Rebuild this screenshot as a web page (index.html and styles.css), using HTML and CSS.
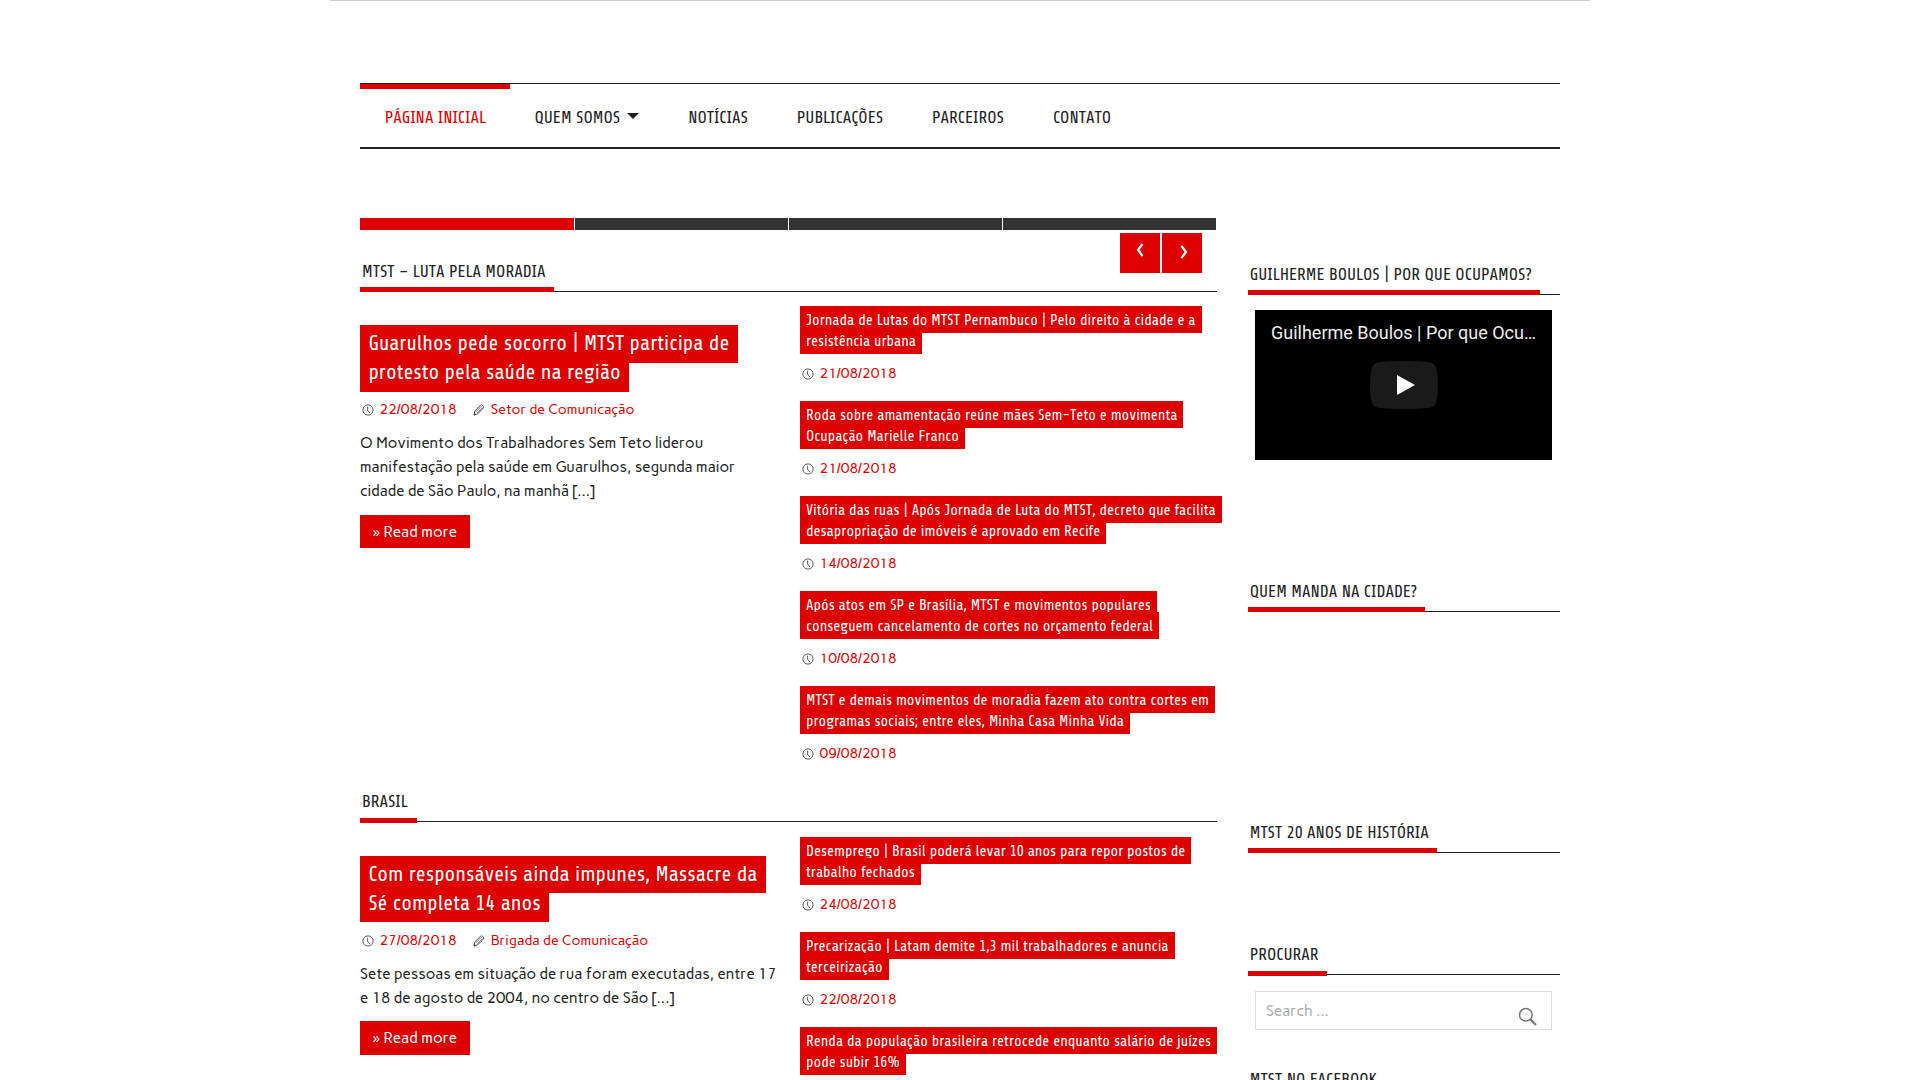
FILE: index.html
```html
<!DOCTYPE html>
<html lang="pt-BR">
<head>
<meta charset="utf-8">
<title>MTST</title>
<link rel="stylesheet" href="styles.css">
</head>
<body>
<svg class="sprite" aria-hidden="true">
  <symbol id="clock" viewBox="0 0 12 12"><circle cx="6" cy="6" r="5.1" fill="none" stroke="#5a5a5a" stroke-width="1"/><path d="M5.600 2.600V6.200L7.800 8.900" fill="none" stroke="#5a5a5a" stroke-width="1"/></symbol>
  <symbol id="pencil" viewBox="0 0 12 12"><path d="M1 11l.8-4L7.600 1.200q.9-.8 1.800 0l1 1q.8.9 0 1.800L4.800 9.800z" fill="none" stroke="#555"/><path d="M3 7.600L8.300 2.300M4.300 8.900L9.600 3.600M1 11l.4-2 1.500 1.500z" fill="#555" stroke="#555" stroke-width=".8"/></symbol>
</svg>
<div class="page">
  <nav class="menu">
    <a class="current" href="#">Página Inicial</a>
    <a class="parent" href="#">Quem Somos</a>
    <a href="#">Notícias</a>
    <a href="#">Publicações</a>
    <a href="#">Parceiros</a>
    <a href="#">Contato</a>
  </nav>
  <div class="columns">
    <main class="content">
      <div class="slider">
        <div class="pager"><i class="active"></i><i></i><i></i><i></i></div>
        <div class="arrows">
          <button class="prev" aria-label="Previous"><svg width="8" height="14" viewBox="0 0 8 14"><path d="M6.500 1L2 7l4.500 6" fill="none" stroke="#fff" stroke-width="2.200"/></svg></button>
          <button class="next" aria-label="Next"><svg width="8" height="14" viewBox="0 0 8 14"><path d="M1.500 1L6 7l-4.500 6" fill="none" stroke="#fff" stroke-width="2.200"/></svg></button>
        </div>
      </div>
      <section class="category">
        <h2 class="title"><span>MTST – Luta pela moradia</span></h2>
        <div class="posts">
          <article class="lead">
            <h3><a href="#">Guarulhos pede socorro | MTST participa de protesto pela saúde na região</a></h3>
            <p class="meta"><svg><use href="#clock"/></svg><a href="#">22/08/2018</a><svg class="by"><use href="#pencil"/></svg><a href="#">Setor de Comunicação</a></p>
            <p class="text">O Movimento dos Trabalhadores Sem Teto liderou manifestação pela saúde em Guarulhos, segunda maior cidade de São Paulo, na manhã [...]</p>
            <a class="more" href="#">» Read more</a>
          </article>
          <div class="list">
            <article><h3><a href="#">Jornada de Lutas do MTST Pernambuco | Pelo direito à cidade e a<br>resistência urbana</a></h3><p class="meta"><svg><use href="#clock"/></svg><a href="#">21/08/2018</a></p></article>
            <article><h3><a href="#">Roda sobre amamentação reúne mães Sem-Teto e movimenta<br>Ocupação Marielle Franco</a></h3><p class="meta"><svg><use href="#clock"/></svg><a href="#">21/08/2018</a></p></article>
            <article><h3><a href="#">Vitória das ruas | Após Jornada de Luta do MTST, decreto que facilita<br>desapropriação de imóveis é aprovado em Recife</a></h3><p class="meta"><svg><use href="#clock"/></svg><a href="#">14/08/2018</a></p></article>
            <article><h3><a href="#">Após atos em SP e Brasília, MTST e movimentos populares<br>conseguem cancelamento de cortes no orçamento federal</a></h3><p class="meta"><svg><use href="#clock"/></svg><a href="#">10/08/2018</a></p></article>
            <article><h3><a href="#">MTST e demais movimentos de moradia fazem ato contra cortes em<br>programas sociais; entre eles, Minha Casa Minha Vida</a></h3><p class="meta"><svg><use href="#clock"/></svg><a href="#">09/08/2018</a></p></article>
          </div>
        </div>
      </section>
      <section class="category brasil">
        <h2 class="title"><span>Brasil</span></h2>
        <div class="posts">
          <article class="lead">
            <h3><a href="#">Com responsáveis ainda impunes, Massacre da Sé completa 14 anos</a></h3>
            <p class="meta"><svg><use href="#clock"/></svg><a href="#">27/08/2018</a><svg class="by"><use href="#pencil"/></svg><a href="#">Brigada de Comunicação</a></p>
            <p class="text">Sete pessoas em situação de rua foram executadas, entre 17 e 18 de agosto de 2004, no centro de São [...]</p>
            <a class="more" href="#">» Read more</a>
          </article>
          <div class="list">
            <article><h3><a href="#">Desemprego | Brasil poderá levar 10 anos para repor postos de<br>trabalho fechados</a></h3><p class="meta"><svg><use href="#clock"/></svg><a href="#">24/08/2018</a></p></article>
            <article><h3><a href="#">Precarização | Latam demite 1,3 mil trabalhadores e anuncia<br>terceirização</a></h3><p class="meta"><svg><use href="#clock"/></svg><a href="#">22/08/2018</a></p></article>
            <article><h3><a href="#">Renda da população brasileira retrocede enquanto salário de juízes<br>pode subir 16%</a></h3></article>
          </div>
        </div>
      </section>
    </main>
    <aside class="sidebar">
      <section class="widget boulos">
        <h2 class="title"><span>Guilherme Boulos | Por que Ocupamos?</span></h2>
        <div class="video">
          <div class="video-title">Guilherme Boulos | Por que Ocu…</div>
          <svg class="play" viewBox="0 0 68 48"><path d="M66.520 7.740c-.78-2.930-2.490-5.410-5.420-6.190C55.790.13 34 0 34 0S12.210.13 6.900 1.550C3.970 2.330 2.270 4.810 1.480 7.740.06 13.050 0 24 0 24s.06 10.950 1.480 16.260c.78 2.930 2.490 5.410 5.420 6.190C12.210 47.870 34 48 34 48s21.790-.13 27.100-1.550c2.930-.78 4.640-3.260 5.420-6.190C67.940 34.950 68 24 68 24s-.06-10.950-1.480-16.260z" fill="#212121" fill-opacity=".8"/><path d="M45 24L27 14v20" fill="#fff"/></svg>
        </div>
      </section>
      <section class="widget cidade"><h2 class="title"><span>Quem manda na cidade?</span></h2></section>
      <section class="widget historia"><h2 class="title"><span>MTST 20 anos de história</span></h2></section>
      <section class="widget procurar">
        <h2 class="title"><span>Procurar</span></h2>
        <form class="search">
          <input type="text" placeholder="Search ...">
          <svg width="20" height="20" viewBox="0 0 20 20"><circle cx="7.800" cy="7.800" r="6.300" fill="none" stroke="#777" stroke-width="1.500"/><path d="M12.300 12.300L18 18" stroke="#777" stroke-width="2.300"/></svg>
        </form>
      </section>
      <section class="widget"><h2 class="title"><span>MTST no Facebook</span></h2></section>
    </aside>
  </div>
</div>
</body>
</html>
```
FILE: styles.css
```css
* { box-sizing: border-box; }

body {
  margin: 0;
  height: 1080px;
  overflow: hidden;
  background: #fff;
  color: #222;
  font-family: Carme, "Open Sans", sans-serif;
  font-size: 15px;
  font-kerning: none;
}

a { color: #d00; text-decoration: none; }
h2, h3, p { margin: 0; font-weight: normal; }
.sprite { display: none; }

.page {
  width: 1260px;
  margin: 0 auto;
  padding: 82px 30px 0;
  border-top: 1px solid #ccc;
}

/* Main menu */
.menu {
  display: flex;
  height: 66px;
  border-top: 1px solid #222;
  border-bottom: 2px solid #222;
}
.menu a {
  padding: 18px 24.5px 0;
  border-top: 5px solid transparent;
  color: #222;
  font-family: Share, "Roboto Condensed", sans-serif;
  font-size: 17px;
  line-height: 22px;
  text-transform: uppercase;
}
.menu .current {
  padding-left: 24.7px;
  padding-right: 24px;
  border-top-color: #d00;
  color: #d00;
}
.menu .parent::after {
  content: "";
  display: inline-block;
  margin-left: 7px;
  vertical-align: 4px;
  border: 6px solid transparent;
  border-top-color: #222;
  border-bottom: 0;
}

.columns { display: flex; justify-content: space-between; }
.content { width: 857px; padding-top: 69px; }
.sidebar { width: 312px; padding-top: 115px; }

/* Slider controls */
.slider { height: 43px; }
.pager { display: flex; gap: 1px; }
.pager i { width: 213px; height: 12px; background: #333; }
.pager .active { width: 214px; background: #d00; }
.arrows {
  display: flex;
  justify-content: flex-end;
  gap: 2px;
  padding: 3px 15px 0 0;
}
.arrows button {
  width: 40px;
  height: 40px;
  padding: 0;
  border: 0;
  background: #d00;
}
.arrows .prev { padding-bottom: 4px; }
.arrows .next { padding: 0 0 0 4px; }

/* Section titles */
.title {
  height: 31px;
  border-bottom: 1px solid #222;
  color: #222;
  font-family: Share, "Roboto Condensed", sans-serif;
  font-size: 17px;
  line-height: 22px;
  text-transform: uppercase;
}
.title span {
  display: inline-block;
  height: 31px;
  padding: 0 8.5px 0 2px;
  border-bottom: 5px solid #d00;
}
.sidebar .title span { padding-left: 1.7px; }
.brasil .title span { padding-right: 9px; }
.brasil .title span,
.procurar .title span { height: 32px; }

/* Posts */
.category { padding-bottom: 6px; }
.posts { display: flex; gap: 20px; }
.lead { flex: none; width: 420px; padding-top: 37px; }
.list { flex: none; width: 430px; padding-top: 18px; }

h3 { font-family: Share, "Roboto Condensed", sans-serif; }
h3 a {
  background: #d00;
  color: #fff;
  -webkit-box-decoration-break: clone;
  box-decoration-break: clone;
}
.lead h3 { font-size: 21px; line-height: 29px; }
.lead h3 a { padding: 6px 8.4px 8px; }
.list h3 { font-size: 15px; line-height: 21px; white-space: nowrap; }
.list h3 a { padding: 6px 6px 4px; }
.list article { height: 95px; }

.meta { display: flex; font-size: 14px; line-height: 20px; }
.meta svg { width: 12px; height: 12px; margin: 4px 5.5px 0 2px; }
.meta .by { margin-left: 16.5px; }
.lead .meta { margin-top: 13px; }
.list .meta { margin-top: 12px; }
.text { margin-top: 11px; line-height: 24px; }
.more {
  display: inline-block;
  height: 33px;
  margin-top: 12px;
  padding: 0 12.6px;
  background: #d00;
  color: #fff;
  font-size: 15.2px;
  line-height: 34px;
}

.brasil .posts { padding-top: 1px; }
.brasil .lead h3 a { padding-bottom: 7px; }
.brasil .more { height: 34px; margin-top: 11px; line-height: 35px; }

/* Sidebar */
.boulos { height: 317px; }
.cidade { height: 241px; }
.historia { height: 122px; }
.procurar { height: 125px; }
.video {
  width: 297px;
  height: 150px;
  margin: 15px 0 0 7px;
  padding: 12px 16px;
  background: #000;
}
.video-title {
  color: #eee;
  font: 18px/22px Roboto, sans-serif;
  white-space: nowrap;
}
.play { display: block; width: 68px; height: 48px; margin: 17px auto 0; }
.search {
  display: flex;
  align-items: flex-start;
  width: 297px;
  height: 39px;
  margin: 16px 0 0 7px;
  border: 1px solid #ddd;
}
.search input {
  width: 240px;
  height: 37px;
  padding: 0 10px;
  border: 0;
  background: none;
  font: inherit;
  outline: 0;
}
.search input::placeholder { color: #aaa; }
.search svg { margin: 15px 0 0 21.5px; }
```
